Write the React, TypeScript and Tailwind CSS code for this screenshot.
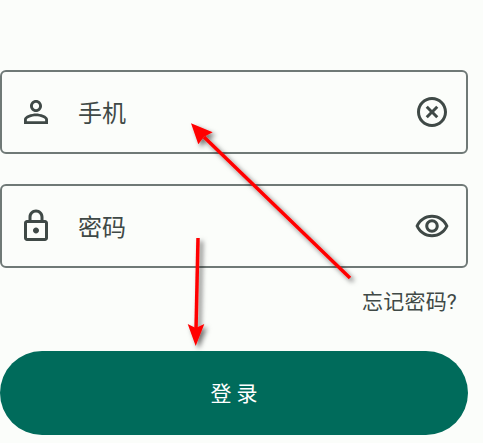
import React from 'react';

const font = 'font-["Roboto","Noto_Sans_CJK_SC",sans-serif]';

function MaterialIcon({ d, className }: { d: string; className?: string }) {
  return (
    <svg viewBox="0 0 24 24" className={`w-9 h-9 shrink-0 fill-[#3f4946] ${className ?? ''}`}>
      <path d={d} />
    </svg>
  );
}

const icons = {
  person:
    'M12 5.9c1.16 0 2.1.94 2.1 2.1s-.94 2.1-2.1 2.1S9.9 9.16 9.9 8s.94-2.1 2.1-2.1m0 9c2.97 0 6.1 1.46 6.1 2.1v1.1H5.9V17c0-.64 3.13-2.1 6.1-2.1M12 4C9.79 4 8 5.79 8 8s1.79 4 4 4 4-1.79 4-4-1.79-4-4-4zm0 9c-2.67 0-8 1.34-8 4v3h16v-3c0-2.66-5.33-4-8-4z',
  lock:
    'M18 8h-1V6c0-2.76-2.24-5-5-5S7 3.24 7 6v2H6c-1.1 0-2 .9-2 2v10c0 1.1.9 2 2 2h12c1.1 0 2-.9 2-2V10c0-1.1-.9-2-2-2zM9 6c0-1.66 1.34-3 3-3s3 1.34 3 3v2H9V6zm9 14H6V10h12v10zm-6-3c1.1 0 2-.9 2-2s-.9-2-2-2-2 .9-2 2 .9 2 2 2z',
  clear:
    'M14.8 7.8L12 10.6 9.2 7.8 7.8 9.2 10.6 12 7.8 14.8 9.2 16.2 12 13.4 14.8 16.2 16.2 14.8 13.4 12 16.2 9.2zM12 2C6.47 2 2 6.47 2 12s4.47 10 10 10 10-4.47 10-10S17.53 2 12 2zm0 18c-4.41 0-8-3.59-8-8s3.59-8 8-8 8 3.59 8 8-3.59 8-8 8z',
  eye:
    'M12 6.5c3.79 0 7.17 2.13 8.82 5.5-1.65 3.37-5.02 5.5-8.82 5.5S4.83 15.37 3.18 12C4.83 8.63 8.21 6.5 12 6.5m0-2C7 4.5 2.73 7.61 1 12c1.73 4.39 6 7.5 11 7.5s9.27-3.11 11-7.5c-1.73-4.39-6-7.5-11-7.5zm0 5c1.38 0 2.5 1.12 2.5 2.5s-1.12 2.5-2.5 2.5-2.5-1.12-2.5-2.5 1.12-2.5 2.5-2.5m0-2c-2.48 0-4.5 2.02-4.5 4.5s2.02 4.5 4.5 4.5 4.5-2.02 4.5-4.5-2.02-4.5-4.5-4.5z',
};

function Field({ left, right, label }: { left: string; right: string; label: string }) {
  return (
    <div className="h-[84px] flex items-center px-4 border-2 border-[#6f7976] rounded-[6px]">
      <MaterialIcon d={left} />
      <span className="ml-6 pt-1 flex-1 text-[24px] text-[#3f4946]">{label}</span>
      <MaterialIcon d={right} />
    </div>
  );
}

// the red annotation arrows drawn on top of the screenshot
function Arrows() {
  return (
    <svg viewBox="0 0 483 443" className="absolute inset-0 w-[483px] h-[443px] pointer-events-none">
      <defs>
        <filter id="shadow" x="-30%" y="-30%" width="160%" height="160%">
          <feDropShadow dx="3" dy="3" stdDeviation="2.5" floodColor="#000" floodOpacity="0.55" />
        </filter>
      </defs>
      <g filter="url(#shadow)" fill="#ff0000">
        <path d="M350 278L204 137" stroke="#ff0000" strokeWidth="3.5" fill="none" />
        <path d="M191 123.3L212.7 132.3L204 136.7L198.3 144.3Z" />
        <path d="M198 238L196 330" stroke="#ff0000" strokeWidth="3.5" fill="none" />
        <path d="M195.7 346L187.7 324L195.7 328L204.3 324Z" />
      </g>
    </svg>
  );
}

export default function App() {
  return (
    <div className={`relative w-[483px] h-[443px] overflow-hidden bg-[#fbfdfa] ${font}`}>
      <div className="w-[468px] pt-[70px] flex flex-col">
        <Field left={icons.person} right={icons.clear} label="手机" />
        <div className="mt-[30px]">
          <Field left={icons.lock} right={icons.eye} label="密码" />
        </div>
        <div className="mt-5 h-[29px] pr-[11px] flex justify-end items-center text-[21px] tracking-[0.2px] text-[#3f4946] leading-none">
          忘记密码?
        </div>
        <button className="mt-[34px] h-[84px] pt-[3px] rounded-full bg-[#006b5b] text-white text-[21px] flex items-center justify-center">
          登 录
        </button>
      </div>
      <Arrows />
    </div>
  );
}
